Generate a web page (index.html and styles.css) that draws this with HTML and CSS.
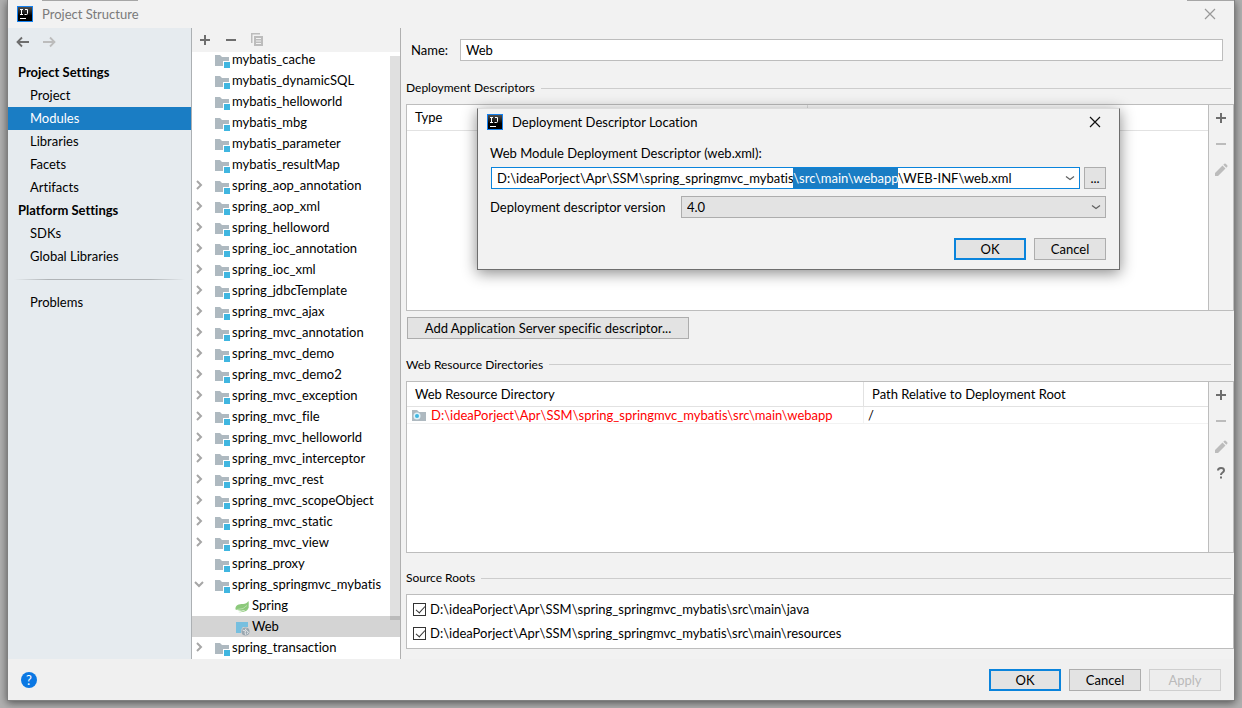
FILE: index.html
```html
<!DOCTYPE html>
<html lang="en">
<head>
<meta charset="utf-8">
<title>Project Structure</title>
<link rel="stylesheet" href="styles.css">
</head>
<body>
<svg class="sprite" aria-hidden="true">
  <defs>
    <linearGradient id="logo-fill" x1="0" y1="0" x2="0" y2="1"><stop offset="0" stop-color="#555"/><stop offset=".6" stop-color="#000"/></linearGradient>
  </defs>
  <symbol id="logo" viewBox="0 0 16 16"><rect x=".5" y=".5" width="15" height="15" fill="url(#logo-fill)" stroke="#1581f0"/><path d="M3 3.500h3M4.500 3.500v5M3 8.500h3M8 3.500h2.500v4q0 1-1 1H7.500M3 12.500h6" fill="none" stroke="#fff"/></symbol>
  <symbol id="plus" viewBox="0 0 16 16"><path d="M8 3v10M3 8h10" stroke="#6e6e6e" stroke-width="2"/></symbol>
  <symbol id="minus" viewBox="0 0 16 16"><path d="M3 8h10" stroke="currentColor" stroke-width="2"/></symbol>
  <symbol id="pencil" viewBox="0 0 16 16"><path d="M2 14v-3l7.500-7.500 3 3L5 14zM10.300 2.700l1-1q.7-.5 1.400.1l1.500 1.500q.6.700.1 1.400l-1 1z" fill="#bcbcbc"/></symbol>
  <symbol id="question" viewBox="0 0 16 16"><path d="M5 5.500Q5 3 8 3t3 2.400C11 7.600 8 7.400 8 10M8 11.500v2" fill="none" stroke="#6e6e6e" stroke-width="2"/></symbol>
  <symbol id="module" viewBox="0 0 16 16"><path d="M1 2h5l2 2h7v4H9v5H1z" fill="#aeb9c0"/><path d="M10 9h6v6h-6z" fill="#40b6e0"/></symbol>
  <symbol id="right" viewBox="0 0 12 12"><path d="M4 2l4 4-4 4" fill="none" stroke="#a6a6a6" stroke-width="2"/></symbol>
  <symbol id="down" viewBox="0 0 12 12"><path d="M2 4l4 4 4-4" fill="none" stroke="#a6a6a6" stroke-width="2"/></symbol>
  <symbol id="chevron" viewBox="0 0 12 12"><path d="M2 4.500l4 3 4-3" fill="none" stroke="#606060" stroke-width="1.200"/></symbol>
  <symbol id="close" viewBox="0 0 12 12"><path d="M1 1l10 10M11 1L1 11" fill="none" stroke="currentColor" stroke-width="1.200"/></symbol>
  <symbol id="spring" viewBox="0 0 16 16"><path d="M14.500 2C15 5 15 9 12.500 10.500 9.500 12 5 12 1.500 10.500 1 6 5 5 9 5q3.500 0 5.500-3z" fill="#8cc97b"/><path d="M15 6q0 4-3 6-3 1.500-8 1 6-.5 8.500-3Q14.500 8.500 15 6z" fill="#8cc97b"/><path d="M3 10.500q7 0 10-4" fill="none" stroke="#b9dfae"/></symbol>
  <symbol id="webfacet" viewBox="0 0 16 16"><path d="M2 2h12v5H9q-2 1.500-2 6H2z" fill="#76bfdf"/><circle cx="11.500" cy="11.500" r="4" fill="#9aa7b0"/><path d="M8.500 10l3 1-.5 2 1 2M12 8.500l-.5 1.500 3 2-1.500 2" fill="none" stroke="#e5e8ea"/></symbol>
  <symbol id="webfolder" viewBox="0 0 16 16"><path d="M1 3h5l2 2h7v9H1z" fill="#aeb9c0"/><circle cx="6" cy="9" r="3.500" fill="#dff2f9"/><circle cx="6" cy="9" r="2" fill="#40b6e0"/></symbol>
</svg>
<div class="window">
  <header class="titlebar">
    <svg class="icon"><use href="#logo"/></svg>
    <h1 class="title">Project Structure</h1>
    <button class="plain close" aria-label="Close"><svg class="cross"><use href="#close"/></svg></button>
  </header>
  <div class="body">
    <nav class="sidebar">
      <div class="history">
        <button class="plain" aria-label="Back"><svg class="icon" viewBox="0 0 16 16"><path d="M14 8H3M7 3.500L2.500 8 7 12.500" fill="none" stroke="#6e6e6e" stroke-width="1.800"/></svg></button>
        <button class="plain" aria-label="Forward" disabled><svg class="icon" viewBox="0 0 16 16"><path d="M2 8h11M9 3.500L13.500 8 9 12.500" fill="none" stroke="#bcbcbc" stroke-width="1.800"/></svg></button>
      </div>
      <h2 class="group">Project Settings</h2>
      <a class="link" href="#project">Project</a>
      <a class="link current" href="#modules">Modules</a>
      <a class="link" href="#libraries">Libraries</a>
      <a class="link" href="#facets">Facets</a>
      <a class="link" href="#artifacts">Artifacts</a>
      <h2 class="group">Platform Settings</h2>
      <a class="link" href="#sdks">SDKs</a>
      <a class="link" href="#global">Global Libraries</a>
      <hr class="divider">
      <a class="link" href="#problems">Problems</a>
    </nav>
    <section class="modules">
      <div class="tools">
        <button class="plain" aria-label="Add"><svg class="icon"><use href="#plus"/></svg></button>
        <button class="plain dark" aria-label="Remove"><svg class="icon"><use href="#minus"/></svg></button>
        <button class="plain" aria-label="Copy" disabled><svg class="icon" viewBox="0 0 16 16"><path d="M2 1h9v1.500H3.500V11H2z" fill="#bcbcbc"/><path d="M5 4h9v10H5z" fill="#bcbcbc"/><path d="M7 6.500h5M7 9h5M7 11.500h5" stroke="#f2f2f2"/></svg></button>
      </div>
      <div class="treeview">
        <ul class="tree">
          <li class="node"><span class="arrow"></span><svg class="icon"><use href="#module"/></svg>mybatis_cache</li>
          <li class="node"><span class="arrow"></span><svg class="icon"><use href="#module"/></svg>mybatis_dynamicSQL</li>
          <li class="node"><span class="arrow"></span><svg class="icon"><use href="#module"/></svg>mybatis_helloworld</li>
          <li class="node"><span class="arrow"></span><svg class="icon"><use href="#module"/></svg>mybatis_mbg</li>
          <li class="node"><span class="arrow"></span><svg class="icon"><use href="#module"/></svg>mybatis_parameter</li>
          <li class="node"><span class="arrow"></span><svg class="icon"><use href="#module"/></svg>mybatis_resultMap</li>
          <li class="node"><svg class="arrow"><use href="#right"/></svg><svg class="icon"><use href="#module"/></svg>spring_aop_annotation</li>
          <li class="node"><svg class="arrow"><use href="#right"/></svg><svg class="icon"><use href="#module"/></svg>spring_aop_xml</li>
          <li class="node"><svg class="arrow"><use href="#right"/></svg><svg class="icon"><use href="#module"/></svg>spring_helloword</li>
          <li class="node"><svg class="arrow"><use href="#right"/></svg><svg class="icon"><use href="#module"/></svg>spring_ioc_annotation</li>
          <li class="node"><svg class="arrow"><use href="#right"/></svg><svg class="icon"><use href="#module"/></svg>spring_ioc_xml</li>
          <li class="node"><svg class="arrow"><use href="#right"/></svg><svg class="icon"><use href="#module"/></svg>spring_jdbcTemplate</li>
          <li class="node"><svg class="arrow"><use href="#right"/></svg><svg class="icon"><use href="#module"/></svg>spring_mvc_ajax</li>
          <li class="node"><svg class="arrow"><use href="#right"/></svg><svg class="icon"><use href="#module"/></svg>spring_mvc_annotation</li>
          <li class="node"><svg class="arrow"><use href="#right"/></svg><svg class="icon"><use href="#module"/></svg>spring_mvc_demo</li>
          <li class="node"><svg class="arrow"><use href="#right"/></svg><svg class="icon"><use href="#module"/></svg>spring_mvc_demo2</li>
          <li class="node"><svg class="arrow"><use href="#right"/></svg><svg class="icon"><use href="#module"/></svg>spring_mvc_exception</li>
          <li class="node"><svg class="arrow"><use href="#right"/></svg><svg class="icon"><use href="#module"/></svg>spring_mvc_file</li>
          <li class="node"><svg class="arrow"><use href="#right"/></svg><svg class="icon"><use href="#module"/></svg>spring_mvc_helloworld</li>
          <li class="node"><svg class="arrow"><use href="#right"/></svg><svg class="icon"><use href="#module"/></svg>spring_mvc_interceptor</li>
          <li class="node"><svg class="arrow"><use href="#right"/></svg><svg class="icon"><use href="#module"/></svg>spring_mvc_rest</li>
          <li class="node"><svg class="arrow"><use href="#right"/></svg><svg class="icon"><use href="#module"/></svg>spring_mvc_scopeObject</li>
          <li class="node"><svg class="arrow"><use href="#right"/></svg><svg class="icon"><use href="#module"/></svg>spring_mvc_static</li>
          <li class="node"><svg class="arrow"><use href="#right"/></svg><svg class="icon"><use href="#module"/></svg>spring_mvc_view</li>
          <li class="node"><span class="arrow"></span><svg class="icon"><use href="#module"/></svg>spring_proxy</li>
          <li class="node"><svg class="arrow"><use href="#down"/></svg><svg class="icon"><use href="#module"/></svg>spring_springmvc_mybatis</li>
          <li class="node child"><svg class="icon"><use href="#spring"/></svg>Spring</li>
          <li class="node child selected"><svg class="icon"><use href="#webfacet"/></svg>Web</li>
          <li class="node"><svg class="arrow"><use href="#right"/></svg><svg class="icon"><use href="#module"/></svg>spring_transaction</li>
        </ul>
        <div class="scrollbar"></div>
      </div>
    </section>
    <main class="details">
      <div class="name-row">
        <label class="name-label" for="name">Name:</label>
        <input class="field" id="name" type="text" value="Web">
      </div>
      <h3 class="section">Deployment Descriptors</h3>
      <div class="panel descriptors">
        <div class="grid">
          <table class="table">
            <thead><tr><th>Type</th><th></th></tr></thead>
          </table>
        </div>
        <div class="actions">
          <button class="plain" aria-label="Add descriptor"><svg class="icon"><use href="#plus"/></svg></button>
          <button class="plain" aria-label="Remove descriptor" disabled><svg class="icon"><use href="#minus"/></svg></button>
          <button class="plain" aria-label="Edit descriptor" disabled><svg class="icon"><use href="#pencil"/></svg></button>
        </div>
      </div>
      <button class="button wide">Add Application Server specific descriptor...</button>
      <h3 class="section">Web Resource Directories</h3>
      <div class="panel resources">
        <div class="grid">
          <table class="table">
            <thead><tr><th class="directory">Web Resource Directory</th><th>Path Relative to Deployment Root</th></tr></thead>
            <tbody><tr><td class="missing"><span class="path"><svg class="icon"><use href="#webfolder"/></svg>D:\ideaPorject\Apr\SSM\spring_springmvc_mybatis\src\main\webapp</span></td><td>/</td></tr></tbody>
          </table>
        </div>
        <div class="actions">
          <button class="plain" aria-label="Add directory"><svg class="icon"><use href="#plus"/></svg></button>
          <button class="plain" aria-label="Remove directory" disabled><svg class="icon"><use href="#minus"/></svg></button>
          <button class="plain" aria-label="Edit directory" disabled><svg class="icon"><use href="#pencil"/></svg></button>
          <button class="plain" aria-label="Directory help"><svg class="icon"><use href="#question"/></svg></button>
        </div>
      </div>
      <h3 class="section">Source Roots</h3>
      <div class="roots">
        <label class="root"><input class="check" type="checkbox" checked>D:\ideaPorject\Apr\SSM\spring_springmvc_mybatis\src\main\java</label>
        <label class="root"><input class="check" type="checkbox" checked>D:\ideaPorject\Apr\SSM\spring_springmvc_mybatis\src\main\resources</label>
      </div>
    </main>
  </div>
  <footer class="footer">
    <button class="help" aria-label="Help">?</button>
    <button class="button primary">OK</button>
    <button class="button">Cancel</button>
    <button class="button" disabled>Apply</button>
  </footer>
</div>
<div class="dialog" role="dialog" aria-labelledby="dialog-title">
  <header class="dialog-head">
    <svg class="icon"><use href="#logo"/></svg>
    <h2 class="title" id="dialog-title">Deployment Descriptor Location</h2>
    <button class="plain close" aria-label="Close dialog"><svg class="cross"><use href="#close"/></svg></button>
  </header>
  <div class="form">
    <label for="descriptor">Web Module Deployment Descriptor (web.xml):</label>
    <div class="path-row">
      <div class="combo">
        <input class="combo-text" id="descriptor" type="text" spellcheck="false" value="D:\ideaPorject\Apr\SSM\spring_springmvc_mybatis\src\main\webapp\WEB-INF\web.xml">
        <button class="plain" aria-label="Recent paths"><svg class="arrow"><use href="#chevron"/></svg></button>
      </div>
      <button class="button browse" aria-label="Browse">...</button>
    </div>
    <div class="version-row">
      <label class="version-label" for="version">Deployment descriptor version</label>
      <div class="select-wrap">
        <select class="select" id="version"><option>4.0</option></select>
        <svg class="arrow"><use href="#chevron"/></svg>
      </div>
    </div>
    <div class="buttons">
      <button class="button primary">OK</button>
      <button class="button">Cancel</button>
    </div>
  </div>
</div>
<script src="script.js"></script>
</body>
</html>
```

FILE: styles.css
```css
* { box-sizing: border-box; }
body { margin: 0; background: #b0b0b0; color: #000; font: 13px/20px Lato, "Noto Sans", sans-serif; font-variant-ligatures: none; overflow: hidden; }
button, input, select { font: inherit; font-variant-ligatures: none; color: inherit; margin: 0; }
h1, h2, h3 { margin: 0; font: inherit; font-variant-ligatures: none; }
.sprite { position: absolute; width: 0; height: 0; }
.icon { width: 16px; height: 16px; flex: none; display: block; }
.arrow { width: 12px; height: 12px; flex: none; }
.cross { width: 12px; height: 12px; display: block; }
.plain { display: flex; align-items: center; border: 0; padding: 0; background: none; color: #bcbcbc; }
.plain.dark { color: #6e6e6e; }

.window { display: flex; flex-direction: column; height: calc(100vh - 7px); margin: 0 7px 7px; border: 1px solid #808080; border-top: 0; background: #f2f2f2; box-shadow: 0 2px 8px #0008; }
.titlebar { display: flex; align-items: center; height: 28px; padding: 0 18px 0 9px; gap: 9px; color: #7a7a7a; background: linear-gradient(#a6a6a6, #a6a6a6) 34px 0 / 96px 1px no-repeat, linear-gradient(#a6a6a6, #a6a6a6) 100% 0 / 47px 1px no-repeat; }
.title { flex: 1; }
.titlebar .close { color: #999; }
.body { display: flex; flex: 1; min-height: 0; }

.sidebar { width: 184px; flex: none; background: #e6ebef; border-right: 1px solid #acb0b3; }
.history { display: flex; align-items: flex-start; gap: 10px; padding: 6px 7px; height: 33px; }
.group { padding-left: 10px; font-weight: 700; line-height: 23px; }
.link { display: block; padding-left: 22px; line-height: 23px; color: #000; text-decoration: none; }
.link.current { background: #1a7dc4; color: #fff; }
.divider { height: 1px; margin: 11px 6px; border: 0; background: linear-gradient(90deg, transparent, #b0b4b7 20%, #b0b4b7 80%, transparent); }

.modules { display: flex; flex-direction: column; width: 209px; flex: none; border-right: 1px solid #b0b0b0; }
.tools { display: flex; align-items: center; gap: 10px; height: 24px; padding: 0 5px; }
.treeview { position: relative; flex: 1; min-height: 0; overflow: hidden; background: #fff; }
.tree { list-style: none; margin: -3px 0 0; padding: 0; }
.node { display: flex; align-items: center; height: 21px; padding: 0 0 2px 1px; white-space: nowrap; }
.node .icon { margin: 4px 2px 0 9px; }
.node.child .icon { margin-left: 41px; }
.selected { background: #d4d4d4; }
.scrollbar { position: absolute; top: 4px; right: 0; bottom: 39px; width: 10px; background: #0000001f; }

.details { display: flex; flex-direction: column; flex: 1; min-width: 0; padding: 11px 0 10px 5px; }
.name-row { display: flex; align-items: center; padding: 0 11px 0 5px; margin-bottom: 17px; }
.name-label { width: 49px; }
.field { flex: 1; height: 22px; padding: 0 5px; border: 1px solid #bdbdbd; background: #fff; }
.section { display: flex; align-items: center; gap: 6px; font-size: 12px; line-height: 20px; margin-bottom: 6px; }
.section::after { content: ""; flex: 1; height: 1px; margin-right: 3px; background: #cdcdcd; }
.panel { display: flex; border: 1px solid #bdbdbd; }
.descriptors { flex: 207 1 0; margin-bottom: 6px; }
.resources { flex: 172 1 0; margin-bottom: 15px; }
.grid { flex: 1; background: #fff; border-right: 1px solid #bdbdbd; }
.table { width: 100%; table-layout: fixed; border-collapse: collapse; }
.table th { height: 25px; padding: 0 8px; border-bottom: 1px solid #e2e2e2; border-left: 1px solid #e2e2e2; text-align: left; font-weight: 400; }
.table td { height: 17px; padding: 0 4px; border-bottom: 1px solid #f2f2f2; border-left: 1px solid #f2f2f2; line-height: 16px; }
.table th:first-child, .table td:first-child { border-left: 0; }
.directory { width: 57%; }
.table .missing { color: #f00; }
.path { display: flex; gap: 4px; white-space: nowrap; }
.actions { display: flex; flex-direction: column; align-items: center; gap: 10px; width: 24px; padding-top: 5px; }
.button { min-width: 72px; height: 22px; padding: 0; border: 1px solid #adadad; background: #e3e3e3; line-height: 18px; white-space: nowrap; }
.button.primary { border: 2px solid #0a84dc; line-height: 16px; }
.button:disabled { border-color: #cfcfcf; background: #ededed; color: #bababa; }
.button.wide { align-self: flex-start; width: 282px; margin: 0 0 16px 1px; }
.button.browse { min-width: 22px; }
.roots { padding: 2px 6px 3px; border: 1px solid #bdbdbd; background: #fff; }
.root { display: flex; align-items: center; gap: 4px; height: 24px; }
.check { appearance: none; width: 13px; height: 13px; border: 1px solid #333; background: #fff; position: relative; }
.check:checked::after { content: ""; position: absolute; left: 4px; top: 0; width: 4px; height: 8px; border: solid #333; border-width: 0 1px 1px 0; transform: rotate(42deg); }

.footer { display: flex; align-items: center; gap: 8px; height: 41px; padding: 0 13px; background: #f0f0f0; }
.help { width: 16px; height: 16px; margin-right: auto; padding: 0; border: 0; border-radius: 50%; background: #0b78e3; color: #fff; line-height: 16px; }

.dialog { position: absolute; left: 477px; top: 108px; width: 643px; border: 1px solid #6e6e6e; border-top-color: #dcdcdc; background: #f2f2f2; box-shadow: 0 3px 14px #0007; }
.dialog-head { display: flex; align-items: center; gap: 9px; height: 26px; padding: 0 18px 0 9px; }
.dialog .close { color: #111; }
.form { display: flex; flex-direction: column; padding: 8px 13px 9px 12px; }
.path-row { display: flex; gap: 4px; margin: 4px 0 7px 1px; }
.combo { display: flex; flex: 1; align-items: center; height: 22px; padding-right: 3px; border: 1px solid #0a84dc; background: #fff; }
.combo-text { flex: 1; min-width: 0; height: 20px; padding: 0 5px; border: 0; outline: 0; background: none; }
.combo-text::selection { background: #1a7dc4; color: #fff; }
.combo .arrow, .select-wrap .arrow { display: block; }
.version-row { display: flex; align-items: center; }
.version-label { width: 191px; white-space: nowrap; }
.select-wrap { position: relative; flex: 1; }
.select { display: block; appearance: none; width: 100%; height: 22px; padding: 0 5px; border: 1px solid #adadad; border-radius: 0; background: #e3e3e3; }
.select-wrap .arrow { position: absolute; right: 4px; top: 5px; pointer-events: none; }
.buttons { display: flex; justify-content: flex-end; gap: 8px; margin-top: 20px; }
```

FILE: script.js
```js
const descriptor = document.getElementById("descriptor");
const segment = "\\src\\main\\webapp";
const start = descriptor.value.indexOf(segment);
descriptor.focus();
descriptor.setSelectionRange(start, start + segment.length);
```
